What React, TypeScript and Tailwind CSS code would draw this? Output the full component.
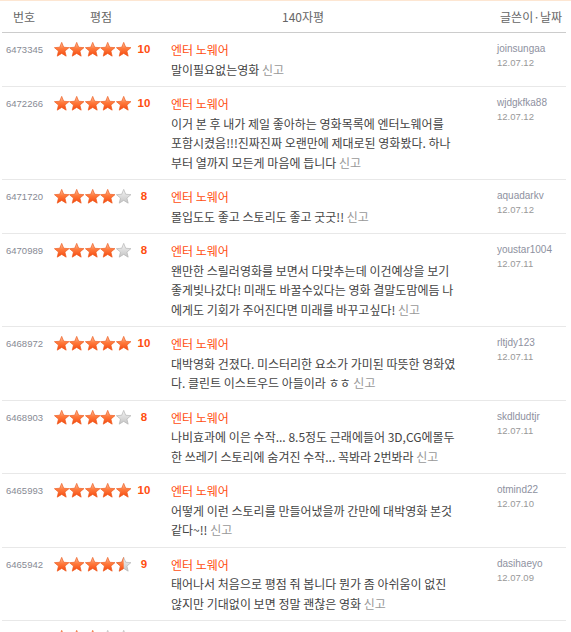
import React from 'react';

type Review = {
  id: string;
  score: number;
  lines: string[];
  writer: string;
  date: string;
};

const reviews: Review[] = [
  { id: '6473345', score: 10, lines: ['말이필요없는영화'], writer: 'joinsungaa', date: '12.07.12' },
  {
    id: '6472266',
    score: 10,
    lines: [
      '이거 본 후 내가 제일 좋아하는 영화목록에 엔터노웨어를',
      '포함시켰음!!!진짜진짜 오랜만에 제대로된 영화봤다. 하나',
      '부터 열까지 모든게 마음에 듭니다',
    ],
    writer: 'wjdgkfka88',
    date: '12.07.12',
  },
  { id: '6471720', score: 8, lines: ['몰입도도 좋고 스토리도 좋고 굿굿!!'], writer: 'aquadarkv', date: '12.07.12' },
  {
    id: '6470989',
    score: 8,
    lines: [
      '왠만한 스릴러영화를 보면서 다맞추는데 이건예상을 보기',
      '좋게빚나갔다! 미래도 바꿀수있다는 영화 결말도맘에듬 나',
      '에게도 기회가 주어진다면 미래를 바꾸고싶다!',
    ],
    writer: 'youstar1004',
    date: '12.07.11',
  },
  {
    id: '6468972',
    score: 10,
    lines: ['대박영화 건졌다. 미스터리한 요소가 가미된 따뜻한 영화였', '다. 클린트 이스트우드 아들이라 ㅎㅎ'],
    writer: 'rltjdy123',
    date: '12.07.11',
  },
  {
    id: '6468903',
    score: 8,
    lines: ['나비효과에 이은 수작... 8.5정도 근래에들어 3D,CG에몰두', '한 쓰레기 스토리에 숨겨진 수작... 꼭봐라 2번봐라'],
    writer: 'skdldudtjr',
    date: '12.07.11',
  },
  {
    id: '6465993',
    score: 10,
    lines: ['어떻게 이런 스토리를 만들어냈을까 간만에 대박영화 본것', '같다~!!'],
    writer: 'otmind22',
    date: '12.07.10',
  },
  {
    id: '6465942',
    score: 9,
    lines: ['태어나서 처음으로 평점 줘 봅니다 뭔가 좀 아쉬움이 없진', '않지만 기대없이 보면 정말 괜찮은 영화'],
    writer: 'dasihaeyo',
    date: '12.07.09',
  },
  {
    id: '6464318',
    score: 6,
    lines: ['기대했던 것보다는 조금 아쉬웠지만 볼만한 영화', '배우들 연기는 좋았어요'],
    writer: 'lfklove',
    date: '12.07.09',
  },
];

const STAR = '7.5,0.4 9.5,5.25 14.73,5.65 10.73,9.05 11.97,14.15 7.5,11.4 3.03,14.15 4.27,9.05 0.27,5.65 5.5,5.25';

const Star = ({ fill }: { fill: 'full' | 'half' | 'empty' }) => (
  <svg viewBox="0 0 15 15" className="h-[15px] w-[15.4px] shrink-0">
    {fill !== 'full' && <polygon points={STAR} fill="url(#starGray)" stroke="#b5b5b5" strokeWidth="0.7" strokeLinejoin="round" />}
    {fill !== 'empty' && (
      <polygon
        points={STAR}
        fill="url(#starOrange)"
        stroke="#ee5a1e"
        strokeWidth="0.7"
        strokeLinejoin="round"
        clipPath={fill === 'half' ? 'url(#starHalf)' : undefined}
      />
    )}
  </svg>
);

const Stars = ({ score }: { score: number }) => (
  <div className="flex h-[19.5px] items-center">
    {[0, 1, 2, 3, 4].map((i) => {
      const v = score - i * 2;
      return <Star key={i} fill={v >= 2 ? 'full' : v === 1 ? 'half' : 'empty'} />;
    })}
  </div>
);

export default function App() {
  return (
    <div className="w-[571px] bg-white font-['Noto_Sans_CJK_KR','Noto_Sans',sans-serif]">
      <svg className="absolute h-0 w-0" aria-hidden="true">
        <defs>
          <linearGradient id="starOrange" x1="0" y1="0" x2="0" y2="1">
            <stop offset="0" stopColor="#ffc2a0" />
            <stop offset="0.45" stopColor="#ff7a3c" />
            <stop offset="1" stopColor="#f5480e" />
          </linearGradient>
          <linearGradient id="starGray" x1="0" y1="0" x2="0" y2="1">
            <stop offset="0" stopColor="#f4f4f4" />
            <stop offset="1" stopColor="#c4c4c4" />
          </linearGradient>
          <clipPath id="starHalf">
            <rect x="0" y="0" width="7.5" height="15" />
          </clipPath>
        </defs>
      </svg>

      <div className="h-px bg-[#fde6d2]" />

      <div className="ml-[2px] mr-[5px]">
        {/* header */}
        <div className="flex h-[32px] items-center border-b border-[#cccccc] text-[12px] text-[#666]">
          <span className="w-[88px] pl-[11px]">번호</span>
          <span className="w-[192px]">평점</span>
          <span className="flex-1">140자평</span>
          <span className="pr-[4px]">글쓴이·날짜</span>
        </div>

        {reviews.map((r) => (
          <div key={r.id} className="flex border-b border-[#e8e8e8] py-[7px]">
            <div className="w-[52px] shrink-0 pl-[4px] font-['Liberation_Sans',sans-serif] text-[9.5px] leading-[19.5px] text-[#878a94]">
              {r.id}
            </div>
            <Stars score={r.score} />
            <div className="ml-[3px] w-[20px] shrink-0 text-center font-['Liberation_Sans',sans-serif] text-[11.5px] font-bold leading-[19.5px] text-[#ff4e10]">
              {r.score}
            </div>
            <div className="ml-[17px] w-[326px] shrink-0 text-[12px] leading-[19.5px] text-[#444]">
              <div className="text-[#ff4e10]">엔터 노웨어</div>
              {r.lines.map((line, i) => (
                <div key={i} className="whitespace-nowrap">
                  {line}
                  {i === r.lines.length - 1 && <span className="text-[#999]"> 신고</span>}
                </div>
              ))}
            </div>
            <div className="pt-[2px] font-['Liberation_Sans',sans-serif] leading-[14px]">
              <div className="text-[10px] text-[#8e91a0]">{r.writer}</div>
              <div className="text-[9.5px] text-[#999]">{r.date}</div>
            </div>
          </div>
        ))}
      </div>
    </div>
  );
}
